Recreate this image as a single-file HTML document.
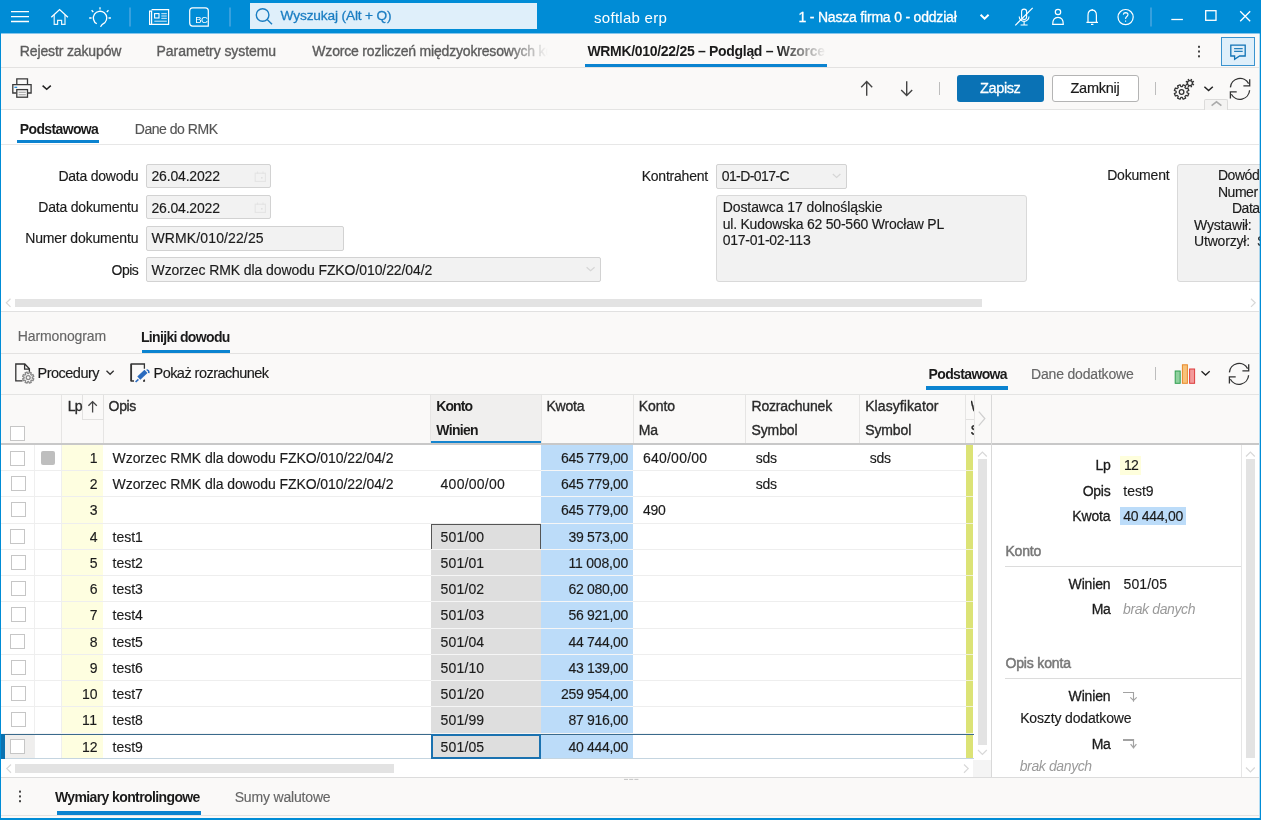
<!DOCTYPE html>
<html><head><meta charset="utf-8">
<style>
*{box-sizing:border-box;margin:0;padding:0}
html,body{width:1261px;height:820px;overflow:hidden;background:#fff}
body{font-family:"Liberation Sans",sans-serif;font-size:14px;color:#1b1b1b;position:relative}
.a{position:absolute}
.t{position:absolute;white-space:pre;line-height:20px;height:20px}
svg{position:absolute;overflow:visible}
.inp{position:absolute;background:#f2f2f2;border:1px solid #d2d2d2;border-radius:2px}
.cb{position:absolute;width:15px;height:15px;background:#fff;border:1px solid #c6c6c6}
.vl{position:absolute;width:1px;background:#e6e5e4}
.hl{position:absolute;height:1px;background:#ebebeb}
</style></head><body>
<!-- base panels -->
<div class="a" style="left:0;top:0;width:1261px;height:33px;background:#008cd6"></div>
<div class="a" style="left:1px;top:33px;width:1258px;height:35px;background:#faf9f8;border-bottom:1px solid #e3e2e1"></div>
<div class="a" style="left:1px;top:68px;width:1258px;height:42px;background:#faf9f8;border-bottom:1px solid #e4e4e3"></div>
<div class="a" style="left:1px;top:110px;width:1258px;height:35px;background:#fff;border-bottom:1px solid #e7e7e7"></div>
<div class="a" style="left:1px;top:145px;width:1258px;height:167px;background:#fff;border-bottom:1px solid #e1e1e1"></div>
<div class="a" style="left:1px;top:312px;width:1258px;height:42px;background:#faf9f8;border-bottom:1px solid #e3e2e1"></div>
<div class="a" style="left:1px;top:354px;width:1258px;height:41px;background:#faf9f8;border-bottom:1px solid #e4e4e3"></div>
<div class="a" style="left:1px;top:395px;width:1258px;height:50px;background:#faf9f8;border-bottom:2px solid #c8c8c8"></div>
<div class="a" style="left:1px;top:777px;width:1258px;height:41px;background:#faf9f8;border-top:1px solid #dcdcdc"></div>
<div class="a" style="left:1px;top:815px;width:1258px;height:1px;background:#e3e2e1"></div>
<div class="a" style="left:0;top:33px;width:1261px;height:1px;background:#86c6ec"></div>
<!-- title bar: search box -->
<div class="a" style="left:250px;top:3px;width:287px;height:26px;background:#dfeffa"></div>
<!-- tab underline -->
<div class="a" style="left:585px;top:64px;width:242px;height:3px;background:#0b83d0"></div>
<!-- chat button -->
<div class="a" style="left:1221px;top:37px;width:34px;height:29px;background:#dfeffa;border:1px solid #3a93cf"></div>
<!-- Zapisz / Zamknij -->
<div class="a" style="left:957px;top:75px;width:87px;height:27px;background:#0a72b5;border-radius:3px"></div>
<div class="a" style="left:1052px;top:75px;width:87px;height:27px;background:#fff;border:1px solid #b4b4b4;border-radius:3px"></div>
<div class="a" style="left:939px;top:82px;width:1px;height:13px;background:#bdbdbd"></div>
<div class="a" style="left:1155px;top:82px;width:1px;height:13px;background:#bdbdbd"></div>
<!-- collapse tab -->
<div class="a" style="left:1204px;top:99px;width:24px;height:11px;background:#f4f3f2;border:1px solid #dcdbda;border-bottom:none;border-radius:2px 2px 0 0"></div>
<!-- subtabs underline -->
<div class="a" style="left:17px;top:140px;width:82px;height:3px;background:#0b83d0"></div>
<!-- form inputs -->
<div class="inp" style="left:146px;top:164px;width:125px;height:24px"></div>
<div class="inp" style="left:146px;top:195px;width:125px;height:24px"></div>
<div class="inp" style="left:146px;top:226px;width:198px;height:25px"></div>
<div class="inp" style="left:146px;top:257px;width:455px;height:25px"></div>
<div class="inp" style="left:716px;top:164px;width:131px;height:25px"></div>
<div class="inp" style="left:716px;top:195px;width:311px;height:87px;border-radius:3px;border-color:#d9d9d9"></div>
<div class="inp" style="left:1177px;top:164px;width:90px;height:118px;border-radius:3px;border-color:#d9d9d9"></div>
<!-- form h scrollbar -->
<div class="a" style="left:15px;top:299px;width:967px;height:8px;background:#e3e3e3"></div>
<!-- lower tabs underline -->
<div class="a" style="left:142px;top:350px;width:88px;height:3px;background:#0b83d0"></div>
<div class="a" style="left:926px;top:386px;width:82px;height:4px;background:#0b83d0"></div>
<div class="a" style="left:1155px;top:367px;width:1px;height:13px;background:#bdbdbd"></div>
<!-- grid header -->
<div class="a" style="left:431px;top:395px;width:110px;height:47px;background:#f0efee"></div>
<div class="a" style="left:431px;top:441px;width:110px;height:2px;background:#1585cf"></div>
<div class="vl" style="left:61px;top:395px;height:48px"></div>
<div class="vl" style="left:103px;top:395px;height:48px"></div>
<div class="vl" style="left:430px;top:395px;height:48px"></div>
<div class="vl" style="left:541px;top:395px;height:48px"></div>
<div class="vl" style="left:633px;top:395px;height:48px"></div>
<div class="vl" style="left:745px;top:395px;height:48px"></div>
<div class="vl" style="left:859px;top:395px;height:48px"></div>
<div class="vl" style="left:965px;top:395px;height:48px"></div>
<div class="a" style="left:82px;top:395px;width:22px;height:25px;background:#faf9f8;border:1px solid #e2e1e0;border-top:none"></div>
<div class="cb" style="left:10px;top:426px"></div>
<div class="hl" style="left:966px;top:419px;width:8px;background:#e2e1e0"></div>
<div class="a" style="left:974px;top:395px;width:17px;height:48px;background:#faf9f8;border-left:1px solid #e6e5e4"></div>
<!-- grid body -->
<div class="a" style="left:1px;top:445px;width:990px;height:332px;background:#fff"></div>
<div class="a" style="left:62px;top:445px;width:41px;height:25px;background:#fefee0;"></div>
<div class="a" style="left:541px;top:445px;width:92px;height:25px;background:#bcdcf9;"></div>
<div class="a" style="left:966px;top:445px;width:7px;height:25px;background:#dce376;"></div>
<div class="a" style="left:966px;top:470px;width:7px;height:1px;background:#f1f3d4;"></div>
<div class="a" style="left:1px;top:470px;width:965px;height:1px;background:#eeeeee;"></div>
<div class="a" style="left:541px;top:470px;width:92px;height:1px;background:#f6f6f6;"></div>
<div class="a" style="left:34px;top:445px;width:1px;height:25px;background:#efefef;"></div>
<div class="a" style="left:61px;top:445px;width:1px;height:25px;background:#efefef;"></div>
<div class="cb" style="left:10px;top:451px"></div>
<div class="a" style="left:41px;top:451px;width:14px;height:14px;background:#bebebe;border-radius:2px"></div>
<div class="a" style="left:62px;top:471px;width:41px;height:25px;background:#fefee0;"></div>
<div class="a" style="left:541px;top:471px;width:92px;height:25px;background:#bcdcf9;"></div>
<div class="a" style="left:966px;top:471px;width:7px;height:25px;background:#dce376;"></div>
<div class="a" style="left:966px;top:496px;width:7px;height:1px;background:#f1f3d4;"></div>
<div class="a" style="left:1px;top:496px;width:965px;height:1px;background:#eeeeee;"></div>
<div class="a" style="left:541px;top:496px;width:92px;height:1px;background:#f6f6f6;"></div>
<div class="a" style="left:34px;top:471px;width:1px;height:25px;background:#efefef;"></div>
<div class="a" style="left:61px;top:471px;width:1px;height:25px;background:#efefef;"></div>
<div class="cb" style="left:11px;top:476px"></div>
<div class="a" style="left:62px;top:497px;width:41px;height:26px;background:#fefee0;"></div>
<div class="a" style="left:541px;top:497px;width:92px;height:26px;background:#bcdcf9;"></div>
<div class="a" style="left:966px;top:497px;width:7px;height:26px;background:#dce376;"></div>
<div class="a" style="left:966px;top:523px;width:7px;height:1px;background:#f1f3d4;"></div>
<div class="a" style="left:1px;top:523px;width:965px;height:1px;background:#eeeeee;"></div>
<div class="a" style="left:541px;top:523px;width:92px;height:1px;background:#f6f6f6;"></div>
<div class="a" style="left:34px;top:497px;width:1px;height:26px;background:#efefef;"></div>
<div class="a" style="left:61px;top:497px;width:1px;height:26px;background:#efefef;"></div>
<div class="cb" style="left:11px;top:502px"></div>
<div class="a" style="left:62px;top:524px;width:41px;height:25px;background:#fefee0;"></div>
<div class="a" style="left:431px;top:524px;width:110px;height:25px;background:#dedede;"></div>
<div class="a" style="left:541px;top:524px;width:92px;height:25px;background:#bcdcf9;"></div>
<div class="a" style="left:966px;top:524px;width:7px;height:25px;background:#dce376;"></div>
<div class="a" style="left:966px;top:549px;width:7px;height:1px;background:#f1f3d4;"></div>
<div class="a" style="left:1px;top:549px;width:965px;height:1px;background:#eeeeee;"></div>
<div class="a" style="left:431px;top:549px;width:202px;height:1px;background:#f6f6f6;"></div>
<div class="a" style="left:34px;top:524px;width:1px;height:25px;background:#efefef;"></div>
<div class="a" style="left:61px;top:524px;width:1px;height:25px;background:#efefef;"></div>
<div class="cb" style="left:10px;top:529px"></div>
<div class="a" style="left:431px;top:524px;width:110px;height:25px;border:1px solid #555;border-bottom:none"></div>
<div class="a" style="left:62px;top:550px;width:41px;height:25px;background:#fefee0;"></div>
<div class="a" style="left:431px;top:550px;width:110px;height:25px;background:#dedede;"></div>
<div class="a" style="left:541px;top:550px;width:92px;height:25px;background:#bcdcf9;"></div>
<div class="a" style="left:966px;top:550px;width:7px;height:25px;background:#dce376;"></div>
<div class="a" style="left:966px;top:575px;width:7px;height:1px;background:#f1f3d4;"></div>
<div class="a" style="left:1px;top:575px;width:965px;height:1px;background:#eeeeee;"></div>
<div class="a" style="left:431px;top:575px;width:202px;height:1px;background:#f6f6f6;"></div>
<div class="a" style="left:34px;top:550px;width:1px;height:25px;background:#efefef;"></div>
<div class="a" style="left:61px;top:550px;width:1px;height:25px;background:#efefef;"></div>
<div class="cb" style="left:11px;top:555px"></div>
<div class="a" style="left:62px;top:576px;width:41px;height:25px;background:#fefee0;"></div>
<div class="a" style="left:431px;top:576px;width:110px;height:25px;background:#dedede;"></div>
<div class="a" style="left:541px;top:576px;width:92px;height:25px;background:#bcdcf9;"></div>
<div class="a" style="left:966px;top:576px;width:7px;height:25px;background:#dce376;"></div>
<div class="a" style="left:966px;top:601px;width:7px;height:1px;background:#f1f3d4;"></div>
<div class="a" style="left:1px;top:601px;width:965px;height:1px;background:#eeeeee;"></div>
<div class="a" style="left:431px;top:601px;width:202px;height:1px;background:#f6f6f6;"></div>
<div class="a" style="left:34px;top:576px;width:1px;height:25px;background:#efefef;"></div>
<div class="a" style="left:61px;top:576px;width:1px;height:25px;background:#efefef;"></div>
<div class="cb" style="left:11px;top:581px"></div>
<div class="a" style="left:62px;top:602px;width:41px;height:26px;background:#fefee0;"></div>
<div class="a" style="left:431px;top:602px;width:110px;height:26px;background:#dedede;"></div>
<div class="a" style="left:541px;top:602px;width:92px;height:26px;background:#bcdcf9;"></div>
<div class="a" style="left:966px;top:602px;width:7px;height:26px;background:#dce376;"></div>
<div class="a" style="left:966px;top:628px;width:7px;height:1px;background:#f1f3d4;"></div>
<div class="a" style="left:1px;top:628px;width:965px;height:1px;background:#eeeeee;"></div>
<div class="a" style="left:431px;top:628px;width:202px;height:1px;background:#f6f6f6;"></div>
<div class="a" style="left:34px;top:602px;width:1px;height:26px;background:#efefef;"></div>
<div class="a" style="left:61px;top:602px;width:1px;height:26px;background:#efefef;"></div>
<div class="cb" style="left:11px;top:607px"></div>
<div class="a" style="left:62px;top:629px;width:41px;height:25px;background:#fefee0;"></div>
<div class="a" style="left:431px;top:629px;width:110px;height:25px;background:#dedede;"></div>
<div class="a" style="left:541px;top:629px;width:92px;height:25px;background:#bcdcf9;"></div>
<div class="a" style="left:966px;top:629px;width:7px;height:25px;background:#dce376;"></div>
<div class="a" style="left:966px;top:654px;width:7px;height:1px;background:#f1f3d4;"></div>
<div class="a" style="left:1px;top:654px;width:965px;height:1px;background:#eeeeee;"></div>
<div class="a" style="left:431px;top:654px;width:202px;height:1px;background:#f6f6f6;"></div>
<div class="a" style="left:34px;top:629px;width:1px;height:25px;background:#efefef;"></div>
<div class="a" style="left:61px;top:629px;width:1px;height:25px;background:#efefef;"></div>
<div class="cb" style="left:10px;top:634px"></div>
<div class="a" style="left:62px;top:655px;width:41px;height:25px;background:#fefee0;"></div>
<div class="a" style="left:431px;top:655px;width:110px;height:25px;background:#dedede;"></div>
<div class="a" style="left:541px;top:655px;width:92px;height:25px;background:#bcdcf9;"></div>
<div class="a" style="left:966px;top:655px;width:7px;height:25px;background:#dce376;"></div>
<div class="a" style="left:966px;top:680px;width:7px;height:1px;background:#f1f3d4;"></div>
<div class="a" style="left:1px;top:680px;width:965px;height:1px;background:#eeeeee;"></div>
<div class="a" style="left:431px;top:680px;width:202px;height:1px;background:#f6f6f6;"></div>
<div class="a" style="left:34px;top:655px;width:1px;height:25px;background:#efefef;"></div>
<div class="a" style="left:61px;top:655px;width:1px;height:25px;background:#efefef;"></div>
<div class="cb" style="left:11px;top:660px"></div>
<div class="a" style="left:62px;top:681px;width:41px;height:25px;background:#fefee0;"></div>
<div class="a" style="left:431px;top:681px;width:110px;height:25px;background:#dedede;"></div>
<div class="a" style="left:541px;top:681px;width:92px;height:25px;background:#bcdcf9;"></div>
<div class="a" style="left:966px;top:681px;width:7px;height:25px;background:#dce376;"></div>
<div class="a" style="left:966px;top:706px;width:7px;height:1px;background:#f1f3d4;"></div>
<div class="a" style="left:1px;top:706px;width:965px;height:1px;background:#eeeeee;"></div>
<div class="a" style="left:431px;top:706px;width:202px;height:1px;background:#f6f6f6;"></div>
<div class="a" style="left:34px;top:681px;width:1px;height:25px;background:#efefef;"></div>
<div class="a" style="left:61px;top:681px;width:1px;height:25px;background:#efefef;"></div>
<div class="cb" style="left:11px;top:686px"></div>
<div class="a" style="left:62px;top:707px;width:41px;height:26px;background:#fefee0;"></div>
<div class="a" style="left:431px;top:707px;width:110px;height:26px;background:#dedede;"></div>
<div class="a" style="left:541px;top:707px;width:92px;height:26px;background:#bcdcf9;"></div>
<div class="a" style="left:966px;top:707px;width:7px;height:26px;background:#dce376;"></div>
<div class="a" style="left:966px;top:733px;width:7px;height:1px;background:#f1f3d4;"></div>
<div class="a" style="left:1px;top:733px;width:965px;height:1px;background:#f4f4f4;"></div>
<div class="a" style="left:34px;top:707px;width:1px;height:26px;background:#efefef;"></div>
<div class="a" style="left:61px;top:707px;width:1px;height:26px;background:#efefef;"></div>
<div class="cb" style="left:11px;top:712px"></div>
<div class="a" style="left:4px;top:735px;width:30px;height:23px;background:#efeeed;"></div>
<div class="a" style="left:62px;top:735px;width:41px;height:23px;background:#fefee0;"></div>
<div class="a" style="left:431px;top:735px;width:110px;height:23px;background:#dedede;"></div>
<div class="a" style="left:541px;top:735px;width:92px;height:23px;background:#bcdcf9;"></div>
<div class="a" style="left:966px;top:735px;width:7px;height:23px;background:#dce376;"></div>
<div class="a" style="left:966px;top:758px;width:7px;height:1px;background:#f1f3d4;"></div>
<div class="a" style="left:34px;top:735px;width:1px;height:23px;background:#efefef;"></div>
<div class="a" style="left:61px;top:735px;width:1px;height:23px;background:#efefef;"></div>
<div class="cb" style="left:10px;top:739px"></div>
<div class="a" style="left:1px;top:734px;width:973px;height:1px;background:#3a6a8c;"></div>
<div class="a" style="left:1px;top:758px;width:973px;height:1px;background:#c5d5e0;"></div>
<div class="a" style="left:1px;top:734px;width:4px;height:25px;background:#0b72b0;"></div>
<div class="a" style="left:431px;top:734px;width:110px;height:25px;border:2px solid #1b72b0"></div>
<!-- grid v scrollbar -->
<div class="a" style="left:978px;top:459px;width:9px;height:286px;background:#e3e3e3"></div>
<div class="a" style="left:973px;top:760px;width:18px;height:17px;background:#f4f4f4"></div>
<!-- grid h scrollbar -->
<div class="a" style="left:15px;top:764px;width:379px;height:9px;background:#e3e3e3"></div>
<!-- right panel -->
<div class="a" style="left:991px;top:395px;width:1px;height:382px;background:#d9d9d9"></div>
<div class="a" style="left:992px;top:445px;width:267px;height:332px;background:#fff"></div>
<div class="a" style="left:1241px;top:445px;width:1px;height:332px;background:#e6e6e6"></div>
<div class="a" style="left:1246px;top:459px;width:9px;height:299px;background:#e3e3e3"></div>
<div class="a" style="left:1120px;top:456px;width:21px;height:19px;background:#fefedc"></div>
<div class="a" style="left:1120px;top:507px;width:66px;height:18px;background:#bcdcf9"></div>
<div class="a" style="left:1005px;top:566px;width:236px;height:1px;background:#dcdcdc"></div>
<div class="a" style="left:1005px;top:678px;width:236px;height:1px;background:#dcdcdc"></div>
<!-- bottom underline -->
<div class="a" style="left:57px;top:811px;width:144px;height:4px;background:#0b83d0"></div>
<svg width="1261" height="820" viewBox="0 0 1261 820" style="left:0;top:0" fill="none" stroke-linecap="butt">
<!-- ===== title bar ===== -->
<g stroke="#fff" stroke-width="1.4">
 <path d="M11 11.6H29M11 16.6H29M11 21.5H29"/>
 <!-- home -->
 <path d="M51.3 17.2L59.6 9.6L67.9 17.2" stroke-width="1.3"/>
 <path d="M54.2 15V24.3H57.6V20.4H61.6V24.3H65V15" stroke-width="1.2" opacity=".9"/>
 <!-- bulb -->
 <path d="M96.8 23.8A6.7 6.7 0 1 1 104.9 22.6Q101.6 24.4 100.5 26.8" stroke-width="1.3"/>
 <path d="M100 7.2V9.4M91.6 10.3L93.3 12M108.5 10.3L106.8 12M89.2 18H91.6M108.5 18H110.9" stroke-width="1.3"/>
 <!-- newspaper -->
 <path d="M151.6 9.7H168.6V24.3H149.6V11.2H151.6V24" stroke-width="1.2"/>
 <rect x="154.6" y="13.6" width="4.4" height="4.4" stroke-width="1.1"/>
 <path d="M161.3 13.7H166.8M161.3 16H166.8M161.3 18.3H166.8M154.3 21.2H166.8" stroke-width="1" opacity=".85"/>
 <!-- BC -->
 <path d="M192.6 7.8H205.4Q208.3 7.8 208.3 10.8V26.1H192.6Q189.7 26.1 189.7 23.1V10.8Q189.7 7.8 192.6 7.8Z" stroke-width="1.2"/>
 <!-- mic muted -->
 <path d="M1021.6 17V11.6A2.5 2.5 0 0 1 1026.6 11.6V17A2.5 2.5 0 0 1 1021.6 17Z" stroke-width="1.1"/>
 <path d="M1019.2 16.5A4.9 4.9 0 0 0 1029 16.5M1024.1 21.6V24.8M1020.6 25H1027.6" stroke-width="1.1"/>
 <path d="M1015.3 25.4L1032.7 7.9" stroke-width="1.2"/>
 <!-- person -->
 <circle cx="1058" cy="12" r="2.7" stroke-width="1.2"/>
 <path d="M1052.7 24.4Q1052.7 17.4 1058 17.4Q1063.3 17.4 1063.3 24.4Z" stroke-width="1.2"/>
 <!-- bell -->
 <path d="M1086.4 22.3H1098M1088 22.3V15.4Q1088 10.2 1092.2 10.2Q1096.4 10.2 1096.4 15.4V22.3" stroke-width="1.2"/>
 <path d="M1092.2 9V10.4M1091 24.3H1093.4" stroke-width="1.3"/>
 <!-- help -->
 <circle cx="1125.6" cy="17.1" r="7.6" stroke-width="1.2"/>
 <path d="M1123.3 14.6Q1123.5 12.6 1125.7 12.6Q1128 12.7 1128 14.6Q1128 15.8 1126.6 16.7Q1125.6 17.4 1125.6 18.9M1125.6 20.4V21.8" stroke-width="1.1"/>
 <!-- window controls -->
 <path d="M1171.3 19.5H1182.9" stroke-width="1.3"/>
 <rect x="1205.7" y="10.7" width="10.3" height="9.6" stroke-width="1.3"/>
 <path d="M1240.2 11.3L1250.2 21.3M1250.2 11.3L1240.2 21.3" stroke-width="1.3"/>
 <!-- account chevron -->
 <path d="M980.6 14.8L984.6 18.7L988.6 14.8" stroke-width="2"/>
</g>
<g stroke="#4fa8e0" stroke-width="1.4">
 <path d="M130 7.5V26.5M230 7.5V26.5M1151 7.5V26.5"/>
</g>
<!-- search icon -->
<g stroke="#1a7dc2" stroke-width="1.4">
 <circle cx="262.6" cy="15" r="6.3"/>
 <path d="M267.2 19.6L272 24.2"/>
</g>
<!-- ===== tab bar ===== -->
<g fill="#444" stroke="none"><rect x="1198" y="45.8" width="2" height="2"/><rect x="1198" y="50.5" width="2" height="2"/><rect x="1198" y="55.3" width="2" height="2"/></g>
<g stroke="#1073b5" stroke-width="1.3">
 <path d="M1230.8 45.2H1245.2V56H1239.6L1234.6 59.3V56H1230.8Z"/>
 <path d="M1234.1 48.6H1242.7M1234.1 51.4H1242.7" stroke-width="1.1" opacity=".9"/>
</g>
<!-- ===== toolbar ===== -->
<g stroke="#3a3a3a" stroke-width="1.3">
 <path d="M16.8 84.2V78.9H27.5V84.2"/>
 <path d="M16.5 93H12.8V84.6H31.1V93H27.8"/>
 <rect x="16.8" y="89.6" width="10.7" height="7.6" fill="#faf9f8"/>
 <path d="M18.6 92.3H25.8M18.6 94.7H25.8" stroke="#9a9a9a" stroke-width="1.1"/>
 <path d="M14.4 87.3H17.2" stroke="#1a86d6" stroke-width="1.2"/>
</g>
<g stroke="#222" stroke-width="1.5">
 <path d="M42.6 85.6L46.7 89.3L50.8 85.6"/>
 <path d="M1204.4 86.7L1208.6 90.5L1212.8 86.7"/>
 <path d="M1201.5 371.3L1205.6 375L1209.7 371.3" stroke-width="1.3"/>
 <path d="M106.5 370.7L110.1 374.3L113.7 370.7" stroke-width="1.3" stroke="#333"/>
</g>
<g stroke="#444" stroke-width="1.4">
 <path d="M866.7 95.8V81.6M861.2 87.2L866.7 81.6L872.2 87.2"/>
 <path d="M906.7 81.3V95.5M901.2 90L906.7 95.5L912.2 90"/>
</g>
<!-- gears -->
<g stroke="#333" stroke-width="1.3">
 <circle cx="1181.6" cy="92" r="2.3"/>
 <path d="M1187.05 92.73L1188.83 93.56L1187.82 96.01L1185.97 95.34L1184.94 96.37L1185.61 98.22L1183.16 99.23L1182.33 97.45L1180.87 97.45L1180.04 99.23L1177.59 98.22L1178.26 96.37L1177.23 95.34L1175.38 96.01L1174.37 93.56L1176.15 92.73L1176.15 91.27L1174.37 90.44L1175.38 87.99L1177.23 88.66L1178.26 87.63L1177.59 85.78L1180.04 84.77L1180.87 86.55L1182.33 86.55L1183.16 84.77L1185.61 85.78L1184.94 87.63L1185.97 88.66L1187.82 87.99L1188.83 90.44L1187.05 91.27Z" stroke-linejoin="round"/>
 <circle cx="1189.9" cy="83.1" r="2.5" stroke-width="1.3"/>
 <path d="M1192.58 84.21L1193.97 84.78M1191.01 85.78L1191.58 87.17M1188.79 85.78L1188.22 87.17M1187.22 84.21L1185.83 84.78M1187.22 81.99L1185.83 81.42M1188.79 80.42L1188.22 79.03M1191.01 80.42L1191.58 79.03M1192.58 81.99L1193.97 81.42" stroke-width="1.5"/>
</g>
<!-- refresh top -->
<g stroke="#333" stroke-width="1.3">
 <path d="M1230.4 87.4A9.7 9.7 0 0 1 1248.6 83.6M1243.4 85.8H1249.7V79.3"/>
 <path d="M1249.6 90.2A9.7 9.7 0 0 1 1231.4 94.2M1236.7 91.8H1230.4V98.4"/>
</g>
<!-- collapse chevron -->
<path d="M1211.6 105.6L1216.5 101.8L1221.4 105.6" stroke="#aaa" stroke-width="1.5"/>
<!-- ===== form ===== -->
<g stroke="#e4e4e4" stroke-width="1.1">
 <rect x="255.2" y="173.2" width="10.2" height="8.2"/><path d="M257.5 171.5V174M263 171.5V174"/><rect x="261" y="177" width="1.6" height="1.6" fill="#e0e0e0" stroke="none"/>
 <rect x="255.2" y="204.2" width="10.2" height="8.2"/><path d="M257.5 202.5V205M263 202.5V205"/><rect x="261" y="208" width="1.6" height="1.6" fill="#e0e0e0" stroke="none"/>
</g>
<g stroke="#d6d6d6" stroke-width="1.2">
 <path d="M586.6 267.2L590.6 270.8L594.6 267.2"/>
 <path d="M832.8 174L836.6 177.4L840.4 174"/>
</g>
<g stroke="#d8d8d8" stroke-width="1.2">
 <path d="M10.5 298.7L6.3 302.8L10.5 306.9"/>
 <path d="M1251 298.7L1255.2 302.8L1251 306.9"/>
 <path d="M11 764.5L6.8 768.6L11 772.7"/>
 <path d="M964 764.5L968.2 768.6L964 772.7"/>
 <path d="M978 456.5L982.4 452L986.8 456.5"/>
 <path d="M978 750L982.4 754.5L986.8 750"/>
 <path d="M1246 456.5L1250.4 452L1254.8 456.5"/>
 <path d="M1246 767.5L1250.4 772L1254.8 767.5"/>
</g>
<!-- ===== lower toolbar ===== -->
<g stroke="#333" stroke-width="1.3">
 <path d="M22.5 380.8H15.8V364H24.8L29.4 368.8V372.2M24.6 364.2V369.2H29.4"/>
 <path d="M134 381H131.2V364H144.4V368.8M143 381H144.4V379.6" />
 <path d="M131.2 364V381" stroke-width="1.7"/>
</g>
<g stroke="#8a8a8a" stroke-width="1.3">
 <circle cx="28.2" cy="377.6" r="2"/>
 <path d="M32.26 378.15L33.77 378.80L32.99 380.69L31.46 380.09L30.69 380.86L31.29 382.39L29.40 383.17L28.75 381.66L27.65 381.66L27.00 383.17L25.11 382.39L25.71 380.86L24.94 380.09L23.41 380.69L22.63 378.80L24.14 378.15L24.14 377.05L22.63 376.40L23.41 374.51L24.94 375.11L25.71 374.34L25.11 372.81L27.00 372.03L27.65 373.54L28.75 373.54L29.40 372.03L31.29 372.81L30.69 374.34L31.46 375.11L32.99 374.51L33.77 376.40L32.26 377.05Z" stroke-linejoin="round"/>
</g>
<g stroke="#2a6bbf">
 <path d="M138.8 378.2L146 371.4" stroke-width="4.4"/>
 <path d="M146.6 369.6Q149.4 370.4 148.8 373.2" stroke-width="1.5"/>
 <path d="M135.6 382L138.4 379.4" stroke-width="1.5"/>
</g>
<!-- chart icon -->
<rect x="1175.2" y="371" width="5" height="12.3" fill="#8fd19e" stroke="#2f9e4f" stroke-width="1"/>
<rect x="1182.4" y="364.8" width="5" height="18.5" fill="#f7c27a" stroke="#e8892b" stroke-width="1"/>
<rect x="1189.6" y="369" width="5" height="14.3" fill="#f39a9a" stroke="#dd3d3d" stroke-width="1"/>
<!-- refresh lower -->
<g stroke="#333" stroke-width="1.3">
 <path d="M1229.4 372.4A9.7 9.7 0 0 1 1247.6 368.6M1242.4 370.8H1248.7V364.3"/>
 <path d="M1248.6 375.2A9.7 9.7 0 0 1 1230.4 379.2M1235.7 376.8H1229.4V383.4"/>
</g>
<!-- sort arrow -->
<path d="M92.6 412.6V401.6M88.4 405.8L92.6 401.6L96.8 405.8" stroke="#444" stroke-width="1.3"/>
<!-- header scroll-right -->
<path d="M978.8 411.6L984.8 418.6L978.8 425.6" stroke="#cfcfcf" stroke-width="1.3"/>
<!-- right panel arrows -->
<g stroke="#a2a2a2" stroke-width="1.1">
 <path d="M1123 692.5H1133.5V701.8M1130.3 697.4L1133.5 700.5L1136.7 697.4"/>
 <path d="M1123 740H1134" stroke-width="2"/><path d="M1133.5 739V748.6M1130.6 744.2L1133.5 747.8L1136.4 744.2" stroke-width="1.2"/>
</g>
<!-- bottom dots + handle -->
<g fill="#444" stroke="none"><rect x="19" y="790.6" width="2" height="2"/><rect x="19" y="795.4" width="2" height="2"/><rect x="19" y="800.2" width="2" height="2"/></g>
<path d="M624 779.4H628M629.2 779.4H633.2M634.4 779.4H638.4" stroke="#c4c4c4" stroke-width="1"/>
</svg>


<div id="txt" style="position:absolute;left:0;top:0;width:1261px;height:820px;will-change:transform">
<div class="t" style="left:280.60px;top:6.05px;font-size:13.7px;color:#1a7dc2;-webkit-text-stroke:0.3px #1a7dc2;letter-spacing:-0.149px;">Wyszukaj (Alt + Q)</div>
<div class="t" style="left:594.10px;top:7.70px;font-size:15px;color:#fff;letter-spacing:0.268px;">softlab erp</div>
<div class="t" style="left:798.50px;top:7.15px;font-size:14px;color:#fff;-webkit-text-stroke:0.3px #fff;letter-spacing:-0.197px;">1 - Nasza firma 0 - oddział</div>
<div class="t" style="left:195.20px;top:9.91px;font-size:9.5px;color:#fff;letter-spacing:-0.602px;">BC</div>
<div class="t" style="left:19.80px;top:40.95px;font-size:14px;color:#5c5c5c;-webkit-text-stroke:0.35px #5c5c5c;letter-spacing:-0.133px;">Rejestr zakupów</div>
<div class="t" style="left:156.60px;top:40.95px;font-size:14px;color:#5c5c5c;-webkit-text-stroke:0.35px #5c5c5c;letter-spacing:-0.064px;">Parametry systemu</div>
<div class="t" style="left:312.30px;top:40.95px;font-size:14px;color:#5c5c5c;-webkit-text-stroke:0.35px #5c5c5c;letter-spacing:-0.186px;-webkit-mask-image:linear-gradient(90deg,#000 0,#000 196px,transparent 236px);mask-image:linear-gradient(90deg,#000 0,#000 196px,transparent 236px);">Wzorce rozliczeń międzyokresowych ko</div>
<div class="t" style="left:587.40px;top:40.95px;font-size:14px;color:#1b1b1b;font-weight:bold;margin-top:0.3px;letter-spacing:-0.306px;-webkit-mask-image:linear-gradient(90deg,#000 0,#000 190px,transparent 240px);mask-image:linear-gradient(90deg,#000 0,#000 190px,transparent 240px);">WRMK/010/22/25 – Podgląd – Wzorce</div>
<div class="t" style="left:980.00px;top:77.98px;font-size:14.5px;color:#fff;-webkit-text-stroke:0.3px #fff;letter-spacing:-0.370px;">Zapisz</div>
<div class="t" style="left:1070.50px;top:77.98px;font-size:14.5px;color:#1b1b1b;-webkit-text-stroke:0.2px #1b1b1b;letter-spacing:-0.252px;">Zamknij</div>
<div class="t" style="left:19.80px;top:118.65px;font-size:14px;color:#1b1b1b;font-weight:bold;margin-top:0.3px;letter-spacing:-0.640px;">Podstawowa</div>
<div class="t" style="left:134.80px;top:118.65px;font-size:14px;color:#555;-webkit-text-stroke:0.15px #555;letter-spacing:-0.476px;">Dane do RMK</div>
<div class="t" style="left:58.40px;top:166.15px;font-size:14px;color:#1b1b1b;-webkit-text-stroke:0.15px #1b1b1b;letter-spacing:-0.238px;">Data dowodu</div>
<div class="t" style="left:38.30px;top:197.15px;font-size:14px;color:#1b1b1b;-webkit-text-stroke:0.15px #1b1b1b;letter-spacing:-0.195px;">Data dokumentu</div>
<div class="t" style="left:25.20px;top:227.85px;font-size:14px;color:#1b1b1b;-webkit-text-stroke:0.15px #1b1b1b;letter-spacing:-0.138px;">Numer dokumentu</div>
<div class="t" style="left:111.50px;top:259.95px;font-size:14px;color:#1b1b1b;-webkit-text-stroke:0.15px #1b1b1b;letter-spacing:-0.499px;">Opis</div>
<div class="t" style="left:151.50px;top:166.15px;font-size:14px;color:#1b1b1b;-webkit-text-stroke:0.15px #1b1b1b;letter-spacing:-0.178px;">26.04.2022</div>
<div class="t" style="left:151.50px;top:197.85px;font-size:14px;color:#1b1b1b;-webkit-text-stroke:0.15px #1b1b1b;letter-spacing:-0.178px;">26.04.2022</div>
<div class="t" style="left:151.50px;top:227.85px;font-size:14px;color:#1b1b1b;-webkit-text-stroke:0.15px #1b1b1b;letter-spacing:0.121px;">WRMK/010/22/25</div>
<div class="t" style="left:151.50px;top:259.95px;font-size:14px;color:#1b1b1b;-webkit-text-stroke:0.15px #1b1b1b;letter-spacing:-0.083px;">Wzorzec RMK dla dowodu FZKO/010/22/04/2</div>
<div class="t" style="left:641.70px;top:166.15px;font-size:14px;color:#1b1b1b;-webkit-text-stroke:0.15px #1b1b1b;letter-spacing:-0.220px;">Kontrahent</div>
<div class="t" style="left:721.70px;top:166.15px;font-size:14px;color:#1b1b1b;-webkit-text-stroke:0.15px #1b1b1b;letter-spacing:-0.584px;">01-D-017-C</div>
<div class="t" style="left:722.70px;top:197.35px;font-size:14px;color:#1b1b1b;-webkit-text-stroke:0.15px #1b1b1b;letter-spacing:-0.086px;">Dostawca 17 dolnośląskie</div>
<div class="t" style="left:722.70px;top:213.55px;font-size:14px;color:#1b1b1b;-webkit-text-stroke:0.15px #1b1b1b;letter-spacing:-0.220px;">ul. Kudowska 62 50-560 Wrocław PL</div>
<div class="t" style="left:722.70px;top:229.85px;font-size:14px;color:#1b1b1b;-webkit-text-stroke:0.15px #1b1b1b;letter-spacing:-0.232px;">017-01-02-113</div>
<div class="t" style="left:1107.20px;top:165.15px;font-size:14px;color:#1b1b1b;-webkit-text-stroke:0.15px #1b1b1b;letter-spacing:-0.189px;">Dokument</div>
<div class="t" style="left:1217.90px;top:165.15px;font-size:14px;color:#1b1b1b;-webkit-text-stroke:0.15px #1b1b1b;letter-spacing:-0.45px;">Dowód</div>
<div class="t" style="left:1217.90px;top:181.75px;font-size:14px;color:#1b1b1b;-webkit-text-stroke:0.15px #1b1b1b;letter-spacing:-0.45px;">Numer</div>
<div class="t" style="left:1231.90px;top:197.95px;font-size:14px;color:#1b1b1b;-webkit-text-stroke:0.15px #1b1b1b;letter-spacing:-0.45px;">Data</div>
<div class="t" style="left:1194.00px;top:214.55px;font-size:14px;color:#1b1b1b;-webkit-text-stroke:0.15px #1b1b1b;letter-spacing:-0.167px;">Wystawił:</div>
<div class="t" style="left:1194.00px;top:230.55px;font-size:14px;color:#1b1b1b;-webkit-text-stroke:0.15px #1b1b1b;letter-spacing:-0.174px;">Utworzył:</div>
<div class="t" style="left:1257.00px;top:230.55px;font-size:14px;color:#1b1b1b;-webkit-text-stroke:0.15px #1b1b1b;letter-spacing:-0.45px;">S</div>
<div class="t" style="left:17.80px;top:326.35px;font-size:14px;color:#666;-webkit-text-stroke:0.15px #666;letter-spacing:-0.117px;">Harmonogram</div>
<div class="t" style="left:140.90px;top:326.35px;font-size:14px;color:#1b1b1b;font-weight:bold;margin-top:0.3px;letter-spacing:-0.657px;">Linijki dowodu</div>
<div class="t" style="left:37.60px;top:362.98px;font-size:14.5px;color:#1b1b1b;-webkit-text-stroke:0.15px #1b1b1b;letter-spacing:-0.522px;">Procedury</div>
<div class="t" style="left:153.50px;top:362.98px;font-size:14.5px;color:#1b1b1b;-webkit-text-stroke:0.15px #1b1b1b;letter-spacing:-0.537px;">Pokaż rozrachunek</div>
<div class="t" style="left:928.60px;top:364.05px;font-size:14px;color:#1b1b1b;font-weight:bold;margin-top:0.3px;letter-spacing:-0.640px;">Podstawowa</div>
<div class="t" style="left:1031.00px;top:364.05px;font-size:14px;color:#666;-webkit-text-stroke:0.15px #666;letter-spacing:-0.177px;">Dane dodatkowe</div>
<div class="t" style="left:67.80px;top:396.05px;font-size:14px;color:#2a2a2a;-webkit-text-stroke:0.35px #2a2a2a;letter-spacing:-0.839px;">Lp</div>
<div class="t" style="left:108.60px;top:396.05px;font-size:14px;color:#2a2a2a;-webkit-text-stroke:0.35px #2a2a2a;letter-spacing:-0.349px;">Opis</div>
<div class="t" style="left:436.30px;top:396.05px;font-size:14px;color:#1b1b1b;font-weight:bold;margin-top:0.3px;letter-spacing:-0.948px;">Konto</div>
<div class="t" style="left:436.30px;top:420.15px;font-size:14px;color:#1b1b1b;font-weight:bold;margin-top:0.3px;letter-spacing:-0.678px;">Winien</div>
<div class="t" style="left:546.40px;top:396.05px;font-size:14px;color:#2a2a2a;-webkit-text-stroke:0.35px #2a2a2a;letter-spacing:-0.204px;">Kwota</div>
<div class="t" style="left:638.80px;top:396.05px;font-size:14px;color:#2a2a2a;-webkit-text-stroke:0.35px #2a2a2a;letter-spacing:-0.099px;">Konto</div>
<div class="t" style="left:638.80px;top:420.15px;font-size:14px;color:#2a2a2a;-webkit-text-stroke:0.35px #2a2a2a;letter-spacing:-0.177px;">Ma</div>
<div class="t" style="left:751.50px;top:396.05px;font-size:14px;color:#2a2a2a;-webkit-text-stroke:0.35px #2a2a2a;letter-spacing:-0.182px;">Rozrachunek</div>
<div class="t" style="left:751.50px;top:420.15px;font-size:14px;color:#2a2a2a;-webkit-text-stroke:0.35px #2a2a2a;letter-spacing:-0.115px;">Symbol</div>
<div class="t" style="left:865.20px;top:396.05px;font-size:14px;color:#2a2a2a;-webkit-text-stroke:0.35px #2a2a2a;letter-spacing:0.087px;">Klasyfikator</div>
<div class="t" style="left:865.20px;top:420.15px;font-size:14px;color:#2a2a2a;-webkit-text-stroke:0.35px #2a2a2a;letter-spacing:-0.115px;">Symbol</div>
<div class="t" style="left:970.60px;top:396.05px;font-size:14px;color:#2a2a2a;-webkit-text-stroke:0.35px #2a2a2a;width:3px;overflow:hidden;">W</div>
<div class="t" style="left:970.60px;top:420.15px;font-size:14px;color:#2a2a2a;-webkit-text-stroke:0.35px #2a2a2a;width:3px;overflow:hidden;">S</div>
<div class="t" style="left:89.75px;top:448.05px;font-size:14px;color:#1b1b1b;-webkit-text-stroke:0.15px #1b1b1b;letter-spacing:-0.047px;">1</div>
<div class="t" style="left:112.60px;top:448.05px;font-size:14px;color:#1b1b1b;-webkit-text-stroke:0.15px #1b1b1b;letter-spacing:-0.083px;">Wzorzec RMK dla dowodu FZKO/010/22/04/2</div>
<div class="t" style="left:561.00px;top:448.05px;font-size:14px;color:#1b1b1b;-webkit-text-stroke:0.15px #1b1b1b;letter-spacing:-0.308px;">645 779,00</div>
<div class="t" style="left:642.90px;top:448.05px;font-size:14px;color:#1b1b1b;-webkit-text-stroke:0.15px #1b1b1b;letter-spacing:0.245px;">640/00/00</div>
<div class="t" style="left:755.80px;top:448.05px;font-size:14px;color:#1b1b1b;-webkit-text-stroke:0.15px #1b1b1b;letter-spacing:-0.332px;">sds</div>
<div class="t" style="left:869.80px;top:448.05px;font-size:14px;color:#1b1b1b;-webkit-text-stroke:0.15px #1b1b1b;letter-spacing:-0.332px;">sds</div>
<div class="t" style="left:89.75px;top:474.05px;font-size:14px;color:#1b1b1b;-webkit-text-stroke:0.15px #1b1b1b;letter-spacing:-0.047px;">2</div>
<div class="t" style="left:112.60px;top:474.05px;font-size:14px;color:#1b1b1b;-webkit-text-stroke:0.15px #1b1b1b;letter-spacing:-0.083px;">Wzorzec RMK dla dowodu FZKO/010/22/04/2</div>
<div class="t" style="left:440.60px;top:474.05px;font-size:14px;color:#1b1b1b;-webkit-text-stroke:0.15px #1b1b1b;letter-spacing:0.234px;">400/00/00</div>
<div class="t" style="left:561.00px;top:474.05px;font-size:14px;color:#1b1b1b;-webkit-text-stroke:0.15px #1b1b1b;letter-spacing:-0.308px;">645 779,00</div>
<div class="t" style="left:755.80px;top:474.05px;font-size:14px;color:#1b1b1b;-webkit-text-stroke:0.15px #1b1b1b;letter-spacing:-0.332px;">sds</div>
<div class="t" style="left:89.75px;top:500.05px;font-size:14px;color:#1b1b1b;-webkit-text-stroke:0.15px #1b1b1b;letter-spacing:-0.047px;">3</div>
<div class="t" style="left:561.00px;top:500.05px;font-size:14px;color:#1b1b1b;-webkit-text-stroke:0.15px #1b1b1b;letter-spacing:-0.308px;">645 779,00</div>
<div class="t" style="left:642.90px;top:500.05px;font-size:14px;color:#1b1b1b;-webkit-text-stroke:0.15px #1b1b1b;letter-spacing:-0.253px;">490</div>
<div class="t" style="left:89.75px;top:527.05px;font-size:14px;color:#1b1b1b;-webkit-text-stroke:0.15px #1b1b1b;letter-spacing:-0.047px;">4</div>
<div class="t" style="left:112.60px;top:527.05px;font-size:14px;color:#1b1b1b;-webkit-text-stroke:0.15px #1b1b1b;letter-spacing:-0.032px;">test1</div>
<div class="t" style="left:440.60px;top:527.05px;font-size:14px;color:#1b1b1b;-webkit-text-stroke:0.15px #1b1b1b;letter-spacing:0.145px;">501/00</div>
<div class="t" style="left:568.40px;top:527.05px;font-size:14px;color:#1b1b1b;-webkit-text-stroke:0.15px #1b1b1b;letter-spacing:-0.300px;">39 573,00</div>
<div class="t" style="left:89.75px;top:553.05px;font-size:14px;color:#1b1b1b;-webkit-text-stroke:0.15px #1b1b1b;letter-spacing:-0.047px;">5</div>
<div class="t" style="left:112.60px;top:553.05px;font-size:14px;color:#1b1b1b;-webkit-text-stroke:0.15px #1b1b1b;letter-spacing:-0.032px;">test2</div>
<div class="t" style="left:440.60px;top:553.05px;font-size:14px;color:#1b1b1b;-webkit-text-stroke:0.15px #1b1b1b;letter-spacing:0.145px;">501/01</div>
<div class="t" style="left:568.40px;top:553.05px;font-size:14px;color:#1b1b1b;-webkit-text-stroke:0.15px #1b1b1b;letter-spacing:-0.183px;">11 008,00</div>
<div class="t" style="left:89.75px;top:579.05px;font-size:14px;color:#1b1b1b;-webkit-text-stroke:0.15px #1b1b1b;letter-spacing:-0.047px;">6</div>
<div class="t" style="left:112.60px;top:579.05px;font-size:14px;color:#1b1b1b;-webkit-text-stroke:0.15px #1b1b1b;letter-spacing:-0.032px;">test3</div>
<div class="t" style="left:440.60px;top:579.05px;font-size:14px;color:#1b1b1b;-webkit-text-stroke:0.15px #1b1b1b;letter-spacing:0.145px;">501/02</div>
<div class="t" style="left:568.40px;top:579.05px;font-size:14px;color:#1b1b1b;-webkit-text-stroke:0.15px #1b1b1b;letter-spacing:-0.300px;">62 080,00</div>
<div class="t" style="left:89.75px;top:605.05px;font-size:14px;color:#1b1b1b;-webkit-text-stroke:0.15px #1b1b1b;letter-spacing:-0.047px;">7</div>
<div class="t" style="left:112.60px;top:605.05px;font-size:14px;color:#1b1b1b;-webkit-text-stroke:0.15px #1b1b1b;letter-spacing:-0.032px;">test4</div>
<div class="t" style="left:440.60px;top:605.05px;font-size:14px;color:#1b1b1b;-webkit-text-stroke:0.15px #1b1b1b;letter-spacing:0.145px;">501/03</div>
<div class="t" style="left:568.40px;top:605.05px;font-size:14px;color:#1b1b1b;-webkit-text-stroke:0.15px #1b1b1b;letter-spacing:-0.300px;">56 921,00</div>
<div class="t" style="left:89.75px;top:632.05px;font-size:14px;color:#1b1b1b;-webkit-text-stroke:0.15px #1b1b1b;letter-spacing:-0.047px;">8</div>
<div class="t" style="left:112.60px;top:632.05px;font-size:14px;color:#1b1b1b;-webkit-text-stroke:0.15px #1b1b1b;letter-spacing:-0.032px;">test5</div>
<div class="t" style="left:440.60px;top:632.05px;font-size:14px;color:#1b1b1b;-webkit-text-stroke:0.15px #1b1b1b;letter-spacing:0.145px;">501/04</div>
<div class="t" style="left:568.40px;top:632.05px;font-size:14px;color:#1b1b1b;-webkit-text-stroke:0.15px #1b1b1b;letter-spacing:-0.300px;">44 744,00</div>
<div class="t" style="left:89.75px;top:658.05px;font-size:14px;color:#1b1b1b;-webkit-text-stroke:0.15px #1b1b1b;letter-spacing:-0.047px;">9</div>
<div class="t" style="left:112.60px;top:658.05px;font-size:14px;color:#1b1b1b;-webkit-text-stroke:0.15px #1b1b1b;letter-spacing:-0.032px;">test6</div>
<div class="t" style="left:440.60px;top:658.05px;font-size:14px;color:#1b1b1b;-webkit-text-stroke:0.15px #1b1b1b;letter-spacing:0.145px;">501/10</div>
<div class="t" style="left:568.40px;top:658.05px;font-size:14px;color:#1b1b1b;-webkit-text-stroke:0.15px #1b1b1b;letter-spacing:-0.300px;">43 139,00</div>
<div class="t" style="left:82.00px;top:684.05px;font-size:14px;color:#1b1b1b;-webkit-text-stroke:0.15px #1b1b1b;letter-spacing:-0.039px;">10</div>
<div class="t" style="left:112.60px;top:684.05px;font-size:14px;color:#1b1b1b;-webkit-text-stroke:0.15px #1b1b1b;letter-spacing:-0.032px;">test7</div>
<div class="t" style="left:440.60px;top:684.05px;font-size:14px;color:#1b1b1b;-webkit-text-stroke:0.15px #1b1b1b;letter-spacing:0.145px;">501/20</div>
<div class="t" style="left:561.00px;top:684.05px;font-size:14px;color:#1b1b1b;-webkit-text-stroke:0.15px #1b1b1b;letter-spacing:-0.308px;">259 954,00</div>
<div class="t" style="left:82.00px;top:710.05px;font-size:14px;color:#1b1b1b;-webkit-text-stroke:0.15px #1b1b1b;letter-spacing:0.477px;">11</div>
<div class="t" style="left:112.60px;top:710.05px;font-size:14px;color:#1b1b1b;-webkit-text-stroke:0.15px #1b1b1b;letter-spacing:-0.032px;">test8</div>
<div class="t" style="left:440.60px;top:710.05px;font-size:14px;color:#1b1b1b;-webkit-text-stroke:0.15px #1b1b1b;letter-spacing:0.145px;">501/99</div>
<div class="t" style="left:568.40px;top:710.05px;font-size:14px;color:#1b1b1b;-webkit-text-stroke:0.15px #1b1b1b;letter-spacing:-0.300px;">87 916,00</div>
<div class="t" style="left:82.00px;top:737.05px;font-size:14px;color:#1b1b1b;-webkit-text-stroke:0.15px #1b1b1b;letter-spacing:-0.039px;">12</div>
<div class="t" style="left:112.60px;top:737.05px;font-size:14px;color:#1b1b1b;-webkit-text-stroke:0.15px #1b1b1b;letter-spacing:-0.032px;">test9</div>
<div class="t" style="left:440.60px;top:737.05px;font-size:14px;color:#1b1b1b;-webkit-text-stroke:0.15px #1b1b1b;letter-spacing:0.145px;">501/05</div>
<div class="t" style="left:568.40px;top:737.05px;font-size:14px;color:#1b1b1b;-webkit-text-stroke:0.15px #1b1b1b;letter-spacing:-0.300px;">40 444,00</div>
<div class="t" style="left:1095.50px;top:454.85px;font-size:14px;color:#1b1b1b;-webkit-text-stroke:0.3px #1b1b1b;letter-spacing:-0.339px;">Lp</div>
<div class="t" style="left:1123.90px;top:454.85px;font-size:14px;color:#1b1b1b;-webkit-text-stroke:0.15px #1b1b1b;letter-spacing:-0.639px;">12</div>
<div class="t" style="left:1082.70px;top:480.75px;font-size:14px;color:#1b1b1b;-webkit-text-stroke:0.3px #1b1b1b;letter-spacing:-0.274px;">Opis</div>
<div class="t" style="left:1123.30px;top:480.75px;font-size:14px;color:#1b1b1b;-webkit-text-stroke:0.15px #1b1b1b;letter-spacing:-0.012px;">test9</div>
<div class="t" style="left:1072.30px;top:505.65px;font-size:14px;color:#1b1b1b;-webkit-text-stroke:0.3px #1b1b1b;letter-spacing:-0.164px;">Kwota</div>
<div class="t" style="left:1123.30px;top:505.65px;font-size:14px;color:#1b1b1b;-webkit-text-stroke:0.15px #1b1b1b;letter-spacing:-0.300px;">40 444,00</div>
<div class="t" style="left:1005.40px;top:541.45px;font-size:14px;color:#787878;-webkit-text-stroke:0.5px #787878;letter-spacing:-0.159px;">Konto</div>
<div class="t" style="left:1068.60px;top:573.85px;font-size:14px;color:#1b1b1b;-webkit-text-stroke:0.3px #1b1b1b;letter-spacing:-0.166px;">Winien</div>
<div class="t" style="left:1123.50px;top:573.85px;font-size:14px;color:#1b1b1b;-webkit-text-stroke:0.15px #1b1b1b;letter-spacing:0.145px;">501/05</div>
<div class="t" style="left:1091.80px;top:599.45px;font-size:14px;color:#1b1b1b;-webkit-text-stroke:0.3px #1b1b1b;letter-spacing:-0.427px;">Ma</div>
<div class="t" style="left:1123.00px;top:599.45px;font-size:14px;color:#9a9a9a;font-style:italic;letter-spacing:-0.380px;">brak danych</div>
<div class="t" style="left:1005.40px;top:653.15px;font-size:14px;color:#787878;-webkit-text-stroke:0.5px #787878;letter-spacing:-0.154px;">Opis konta</div>
<div class="t" style="left:1068.60px;top:685.75px;font-size:14px;color:#1b1b1b;-webkit-text-stroke:0.3px #1b1b1b;letter-spacing:-0.166px;">Winien</div>
<div class="t" style="left:1020.20px;top:707.65px;font-size:14px;color:#1b1b1b;-webkit-text-stroke:0.15px #1b1b1b;letter-spacing:-0.152px;">Koszty dodatkowe</div>
<div class="t" style="left:1091.80px;top:733.95px;font-size:14px;color:#1b1b1b;-webkit-text-stroke:0.3px #1b1b1b;letter-spacing:-0.427px;">Ma</div>
<div class="t" style="left:1019.70px;top:756.05px;font-size:14px;color:#9a9a9a;font-style:italic;letter-spacing:-0.380px;">brak danych</div>
<div class="t" style="left:54.90px;top:786.65px;font-size:14px;color:#1b1b1b;font-weight:bold;margin-top:0.3px;letter-spacing:-0.608px;">Wymiary kontrolingowe</div>
<div class="t" style="left:234.70px;top:786.65px;font-size:14px;color:#666;-webkit-text-stroke:0.15px #666;letter-spacing:-0.173px;">Sumy walutowe</div>
</div>
<!-- window frame -->
<div class="a" style="left:0;top:33px;width:1px;height:787px;background:#008cd6"></div>
<div class="a" style="left:1260px;top:33px;width:1px;height:787px;background:#008cd6"></div>
<div class="a" style="left:1259px;top:33px;width:1px;height:787px;background:rgba(0,140,214,.3)"></div>
<div class="a" style="left:0;top:818px;width:1261px;height:2px;background:#008cd6"></div>
</body></html>
